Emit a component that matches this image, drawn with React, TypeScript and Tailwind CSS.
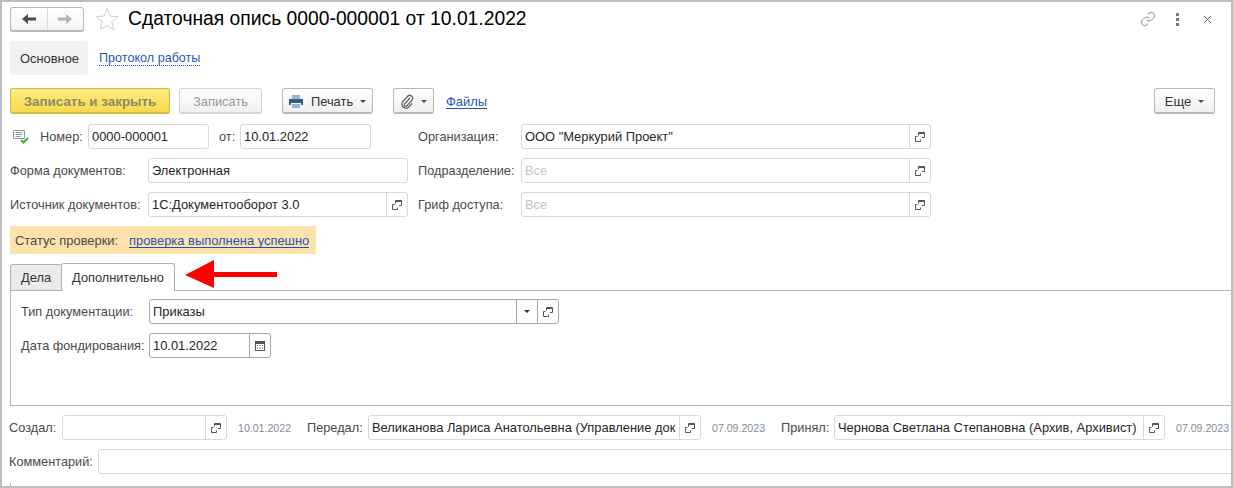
import { Link } from "lucide-react";

function OpenIcon() {
  return (
    <svg width="10" height="10" viewBox="0 0 10 10" fill="none" stroke="#555" strokeWidth="1">
      <path d="M3.500 3.500V.5h6v5H7" />
      <path d="M3.500 1.500h6" />
      <path d="M2.500 4.500h-2v5h5V7.500" />
    </svg>
  );
}

function Caret() {
  return <span className="ml-[7px] h-0 w-0 border-x-[3px] border-t-[3px] border-x-transparent border-t-[#4a4a4a]" />;
}

function NavArrow({ color, flip }: { color: string; flip?: boolean }) {
  return (
    <svg className={flip ? "-scale-x-100" : ""} width="14" height="10" viewBox="0 0 14 10" fill={color}>
      <path d="M0 5l6-5v3.500h8v3H6V10z" />
    </svg>
  );
}

function Field({
  width,
  text,
  placeholder,
  open,
}: {
  width: string;
  text?: string;
  placeholder?: string;
  open?: boolean;
}) {
  return (
    <div className={`flex h-[25px] shrink-0 items-center rounded-[3px] border border-[#d9d9d9] bg-white ${width}`}>
      <div className={`min-w-0 flex-1 overflow-hidden whitespace-nowrap pl-[3px] ${placeholder ? "text-[#c4c4c4]" : "text-[#262626]"}`}>
        {text || placeholder}
      </div>
      {open && (
        <div className="flex h-full w-[21px] shrink-0 items-center justify-center border-l border-[#d9d9d9]">
          <OpenIcon />
        </div>
      )}
    </div>
  );
}

function Label({ width, children }: { width: string; children: string }) {
  return <div className={`shrink-0 whitespace-nowrap text-[12.750px] text-[#4a4a4a] ${width}`}>{children}</div>;
}

function Btn({ width, children, muted }: { width: string; children: React.ReactNode; muted?: boolean }) {
  return (
    <div
      className={`flex h-[26px] shrink-0 items-center justify-center rounded-[3px] border border-b-2 bg-gradient-to-b from-white to-[#f0f0f0] pt-[2px] ${width} ${
        muted ? "border-[#d4d4d4] text-[#999]" : "border-[#b8b8b8] text-[#333]"
      }`}
    >
      {children}
    </div>
  );
}

export default function App() {
  return (
    <div
      className="relative h-[488px] w-[1233px] overflow-hidden border-2 border-[#bdbdbd] bg-white text-[12.900px] leading-[14px]"
      style={{ fontFamily: '"Liberation Sans", Arial, sans-serif' }}
    >
      {/* шапка */}
      <div className="flex h-[34px] items-center pl-[8px]">
        <div className="flex h-[25px] w-[74px] items-center rounded-[3px] border border-b-2 border-[#b8b8b8] bg-gradient-to-b from-white to-[#f2f2f2]">
          <div className="flex h-full w-[37px] items-center justify-center border-r border-[#d9d9d9]">
            <NavArrow color="#4d4d4d" />
          </div>
          <div className="flex h-full w-[36px] items-center justify-center">
            <NavArrow color="#b3b3b3" flip />
          </div>
        </div>
        <svg className="ml-[11px]" width="24" height="24" viewBox="0 0 24 24" fill="none" stroke="#d0d0d0" strokeWidth="1">
          <path d="M12 1.500l3 7.600 8 .6-6.200 5.100 2 8-6.800-4.300-6.800 4.300 2-8L1 9.700l8-.6z" />
        </svg>
        <div className="ml-[9px] whitespace-nowrap text-[19.300px] leading-[22px] text-black">Сдаточная опись 0000-000001 от 10.01.2022</div>
        <div className="ml-auto flex items-center">
          <Link size={16} strokeWidth={1} color="#555" />
          <div className="ml-[20px] flex flex-col gap-[2px]">
            <span className="h-[3px] w-[3px] bg-[#777]" />
            <span className="h-[3px] w-[3px] bg-[#777]" />
            <span className="h-[3px] w-[3px] bg-[#777]" />
          </div>
          <svg className="ml-[24px] mr-[19px]" width="9" height="9" viewBox="0 0 9 9" stroke="#666" strokeWidth="1">
            <path d="M1 1l7 7M8 1L1 8" />
          </svg>
        </div>
      </div>

      {/* вкладки формы */}
      <div className="mt-[5px] flex h-[34px] items-center pl-[8px]">
        <div className="flex h-full w-[78px] items-center justify-center rounded-[3px] bg-[#f2f2f2] pl-[1px] pt-[1px] text-[#333]">Основное</div>
        <div className="ml-[11px] mt-[2px] border-b border-dotted border-[#1f4fbf] text-[12.600px] leading-[13px] text-[#2a55b8]">Протокол работы</div>
      </div>

      {/* командная панель */}
      <div className="mt-[13px] flex h-[26px] items-center pl-[8px] pr-[16px]">
        <div className="flex h-[26px] w-[160px] items-center justify-center rounded-[3px] border border-b-2 border-[#d1b94a] bg-gradient-to-b from-[#fdec7f] to-[#f7d94a] pt-[2px] text-[13.400px] font-bold text-[#8f8a66]">
          Записать и закрыть
        </div>
        <Btn width="ml-[9px] w-[83px]" muted>
          Записать
        </Btn>
        <Btn width="ml-[20px] w-[91px]">
          <svg width="14" height="13" viewBox="0 0 14 13">
            <path d="M3 0h8v4H3z" fill="#9db5cc" />
            <path d="M0 4h14v6h-2V8H2v2H0z" fill="#34608c" />
            <path d="M3 9h8v4H3z" fill="#9db5cc" />
          </svg>
          <span className="ml-[8px]">Печать</span>
          <Caret />
        </Btn>
        <Btn width="ml-[20px] w-[41px]">
          <svg width="14" height="15" viewBox="0 0 14 15" fill="none" stroke="#666" strokeWidth="1.300">
            <path d="M10 4L4.500 10a1.500 1.500 0 0 0 2.200 2L12 6.200A3 3 0 0 0 7.800 2L2.500 8a4.100 4.100 0 0 0 5.800 5.500L12 9.500" />
          </svg>
          <Caret />
        </Btn>
        <div className="ml-[12px] mt-[2px] border-b border-[#1f4fbf] leading-[13px] text-[#2a55b8]">Файлы</div>
        <Btn width="ml-auto w-[61px]">
          <span className="text-[13px]">Еще</span>
          <Caret />
        </Btn>
      </div>

      {/* реквизиты */}
      <div className="mt-[10px] flex h-[25px] items-center pl-[8px]">
        <svg className="ml-[3px] shrink-0" width="16" height="15" viewBox="0 0 16 15" fill="none">
          <path d="M.5 1.500h11v8h-11z" stroke="#8c9aa6" />
          <path d="M2.500 3.500h7M2.500 5.500h7M2.500 7.500h5" stroke="#8c9aa6" />
          <path d="M8 11l2.500 2.500L15 9" stroke="#35b035" strokeWidth="2" />
        </svg>
        <Label width="ml-[11px] w-[48px]">Номер:</Label>
        <Field width="w-[121px]" text="0000-000001" />
        <Label width="ml-[10px] w-[21px]">от:</Label>
        <Field width="w-[131px]" text="10.01.2022" />
        <Label width="ml-[47px] w-[103px]">Организация:</Label>
        <Field width="w-[410px]" text={'ООО "Меркурий Проект"'} open />
      </div>
      <div className="mt-[9px] flex h-[25px] items-center pl-[8px]">
        <Label width="w-[138px]">Форма документов:</Label>
        <Field width="w-[260px]" text="Электронная" />
        <Label width="ml-[10px] w-[103px]">Подразделение:</Label>
        <Field width="w-[410px]" placeholder="Все" open />
      </div>
      <div className="mt-[9px] flex h-[25px] items-center pl-[8px]">
        <Label width="w-[138px]">Источник документов:</Label>
        <Field width="w-[260px]" text="1С:Документооборот 3.0" open />
        <Label width="ml-[10px] w-[103px]">Гриф доступа:</Label>
        <Field width="w-[410px]" placeholder="Все" open />
      </div>

      {/* статус */}
      <div className="ml-[8px] mt-[9px] flex h-[28px] w-[306px] items-center bg-[#fde3ab] pl-[5px] pt-[1px] text-[#333]">
        <span className="w-[114px] shrink-0 text-[#4a4a4a]">Статус проверки:</span>
        <span className="border-b border-[#1f4fbf] leading-[13px] text-[#2a55b8]">проверка выполнена успешно</span>
      </div>

      {/* вкладки */}
      <div className="relative z-10 ml-[8px] mt-[9px] flex h-[28px] items-end">
        <div className="flex h-[27px] w-[52px] items-center justify-center rounded-t-[3px] border border-[#b0b0b0] bg-[#ebebeb] text-[#333]">Дела</div>
        <div className="-ml-px flex h-[28px] w-[114px] items-center justify-center rounded-t-[3px] border border-b-0 border-[#b0b0b0] bg-white text-[12.750px] text-[#333]">
          Дополнительно
        </div>
      </div>
      <div className="-mt-px ml-[8px] h-[116px] border-y border-l border-[#b5b5b5] pl-[10px] pt-[8px]">
        <div className="flex h-[25px] items-center">
          <Label width="w-[128px]">Тип документации:</Label>
          <div className="flex h-[25px] w-[410px] items-center rounded-[3px] border border-[#a8a8a8] bg-white">
            <div className="flex-1 pl-[3px] text-[#262626]">Приказы</div>
            <div className="flex h-full w-[21px] items-center justify-center border-l border-[#a8a8a8]">
              <span className="h-0 w-0 border-x-[3px] border-t-[3px] border-x-transparent border-t-[#333]" />
            </div>
            <div className="flex h-full w-[21px] items-center justify-center border-l border-[#a8a8a8]">
              <OpenIcon />
            </div>
          </div>
        </div>
        <div className="mt-[9px] flex h-[25px] items-center">
          <Label width="w-[128px]">Дата фондирования:</Label>
          <div className="flex h-[25px] w-[122px] items-center rounded-[3px] border border-[#a8a8a8] bg-white">
            <div className="flex-1 pl-[3px] text-[#262626]">10.01.2022</div>
            <div className="flex h-full w-[21px] items-center justify-center border-l border-[#a8a8a8]">
              <svg width="10" height="11" viewBox="0 0 10 11">
                <path d="M0 1h10v10H0z" fill="#555" />
                <path d="M1 4h8v6H1z" fill="#fff" />
                <path d="M2 5h1v1H2zM4.500 5h1v1h-1zM7 5h1v1H7zM2 7.500h1v1H2zM4.500 7.500h1v1h-1zM7 7.500h1v1H7z" fill="#555" />
              </svg>
            </div>
          </div>
        </div>
      </div>

      {/* подвал */}
      <div className="mt-[9px] flex h-[25px] items-center pl-[7px]">
        <Label width="w-[53px]">Создал:</Label>
        <Field width="w-[165px]" open />
        <div className="ml-[11px] w-[69px] shrink-0 text-[10.600px] text-[#7f8c99]">10.01.2022</div>
        <Label width="w-[61px]">Передал:</Label>
        <Field width="w-[333px]" text="Великанова Лариса Анатольевна (Управление док" open />
        <div className="ml-[11px] w-[69px] shrink-0 text-[10.600px] text-[#7f8c99]">07.09.2023</div>
        <Label width="w-[53px]">Принял:</Label>
        <Field width="w-[331px]" text="Чернова Светлана Степановна (Архив, Архивист)" open />
        <div className="ml-[11px] shrink-0 whitespace-nowrap text-[10.600px] text-[#7f8c99]">07.09.2023</div>
      </div>
      <div className="mt-[9px] flex h-[25px] items-center pl-[7px]">
        <Label width="w-[89px]">Комментарий:</Label>
        <div className="h-[25px] flex-1 rounded-l-[3px] border-y border-l border-[#d9d9d9] bg-white" />
      </div>
      <div className="ml-[8px] mt-[9px] h-[3px] w-px bg-[#b5b5b5]" />

      {/* стрелка-выноска */}
      <svg className="absolute left-[183px] top-[256px]" width="94" height="32" viewBox="0 0 94 32" fill="#ff0000">
        <path d="M0 17L29 2v12h63v5H29v11z" />
      </svg>
    </div>
  );
}
